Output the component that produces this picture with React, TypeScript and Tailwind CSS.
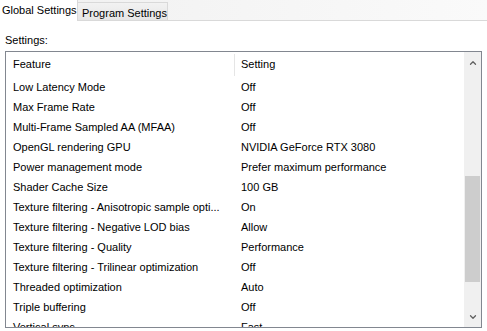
import { ChevronUp, ChevronDown } from "lucide-react";

const rows: [string, string][] = [
  ["Low Latency Mode", "Off"],
  ["Max Frame Rate", "Off"],
  ["Multi-Frame Sampled AA (MFAA)", "Off"],
  ["OpenGL rendering GPU", "NVIDIA GeForce RTX 3080"],
  ["Power management mode", "Prefer maximum performance"],
  ["Shader Cache Size", "100 GB"],
  ["Texture filtering - Anisotropic sample opti...", "On"],
  ["Texture filtering - Negative LOD bias", "Allow"],
  ["Texture filtering - Quality", "Performance"],
  ["Texture filtering - Trilinear optimization", "Off"],
  ["Threaded optimization", "Auto"],
  ["Triple buffering", "Off"],
  ["Vertical sync", "Fast"],
];

export default function App() {
  return (
    <div className="w-[487px] h-[331px] overflow-hidden bg-white text-[11px] text-black font-['Liberation_Sans',Arial,sans-serif] whitespace-nowrap">
      {/* tab strip */}
      <div className="flex h-[21px] items-end bg-gradient-to-r from-[#f0f0f0] to-[#fafafa]">
        <div className="shrink-0 h-[21px] w-[78px] bg-white border-r border-[#d9d9d9] pl-[2px] pt-[3px] leading-[14px] text-[11px]">
          Global Settings
        </div>
        <div className="shrink-0 h-[19px] w-[90px] border-t border-r border-b border-[#d9d9d9] bg-gradient-to-b from-[#f2f2f2] to-[#e6e6e6] pl-[4px] pt-[3px] leading-[14px] text-[11px]">
          Program Settings
        </div>
        <div className="flex-1 h-[21px] border-b border-[#d9d9d9]" />
      </div>

      <div className="px-[5px] pt-[12px]">
        <div className="leading-[14px] mb-[4px]">Settings:</div>

        {/* list box */}
        <div className="flex h-[277px] w-[477px] border border-[#828790] bg-white">
          <div className="flex-1 overflow-hidden">
            <div className="flex h-[25px] items-center">
              <div className="w-[229px] pl-[7px] border-r border-[#e5e5e5] h-[22px] flex items-center">Feature</div>
              <div className="pl-[6px]">Setting</div>
            </div>
            {rows.map(([f, s]) => (
              <div key={f} className="flex h-[20px] items-center">
                <div className="w-[230px] pl-[7px]">{f}</div>
                <div className="pl-[5px]">{s}</div>
              </div>
            ))}
          </div>
          <div className="w-[17px] bg-[#f0f0f0] flex flex-col items-center">
            <ChevronUp className="mt-[6px] w-[10px] h-[10px] text-[#606060]" strokeWidth={3} />
            <div className="mt-[108px] w-[15px] h-[106px] bg-[#cdcdcd]" />
            <ChevronDown className="mt-auto mb-[5px] w-[10px] h-[10px] text-[#606060]" strokeWidth={3} />
          </div>
        </div>
      </div>
    </div>
  );
}
